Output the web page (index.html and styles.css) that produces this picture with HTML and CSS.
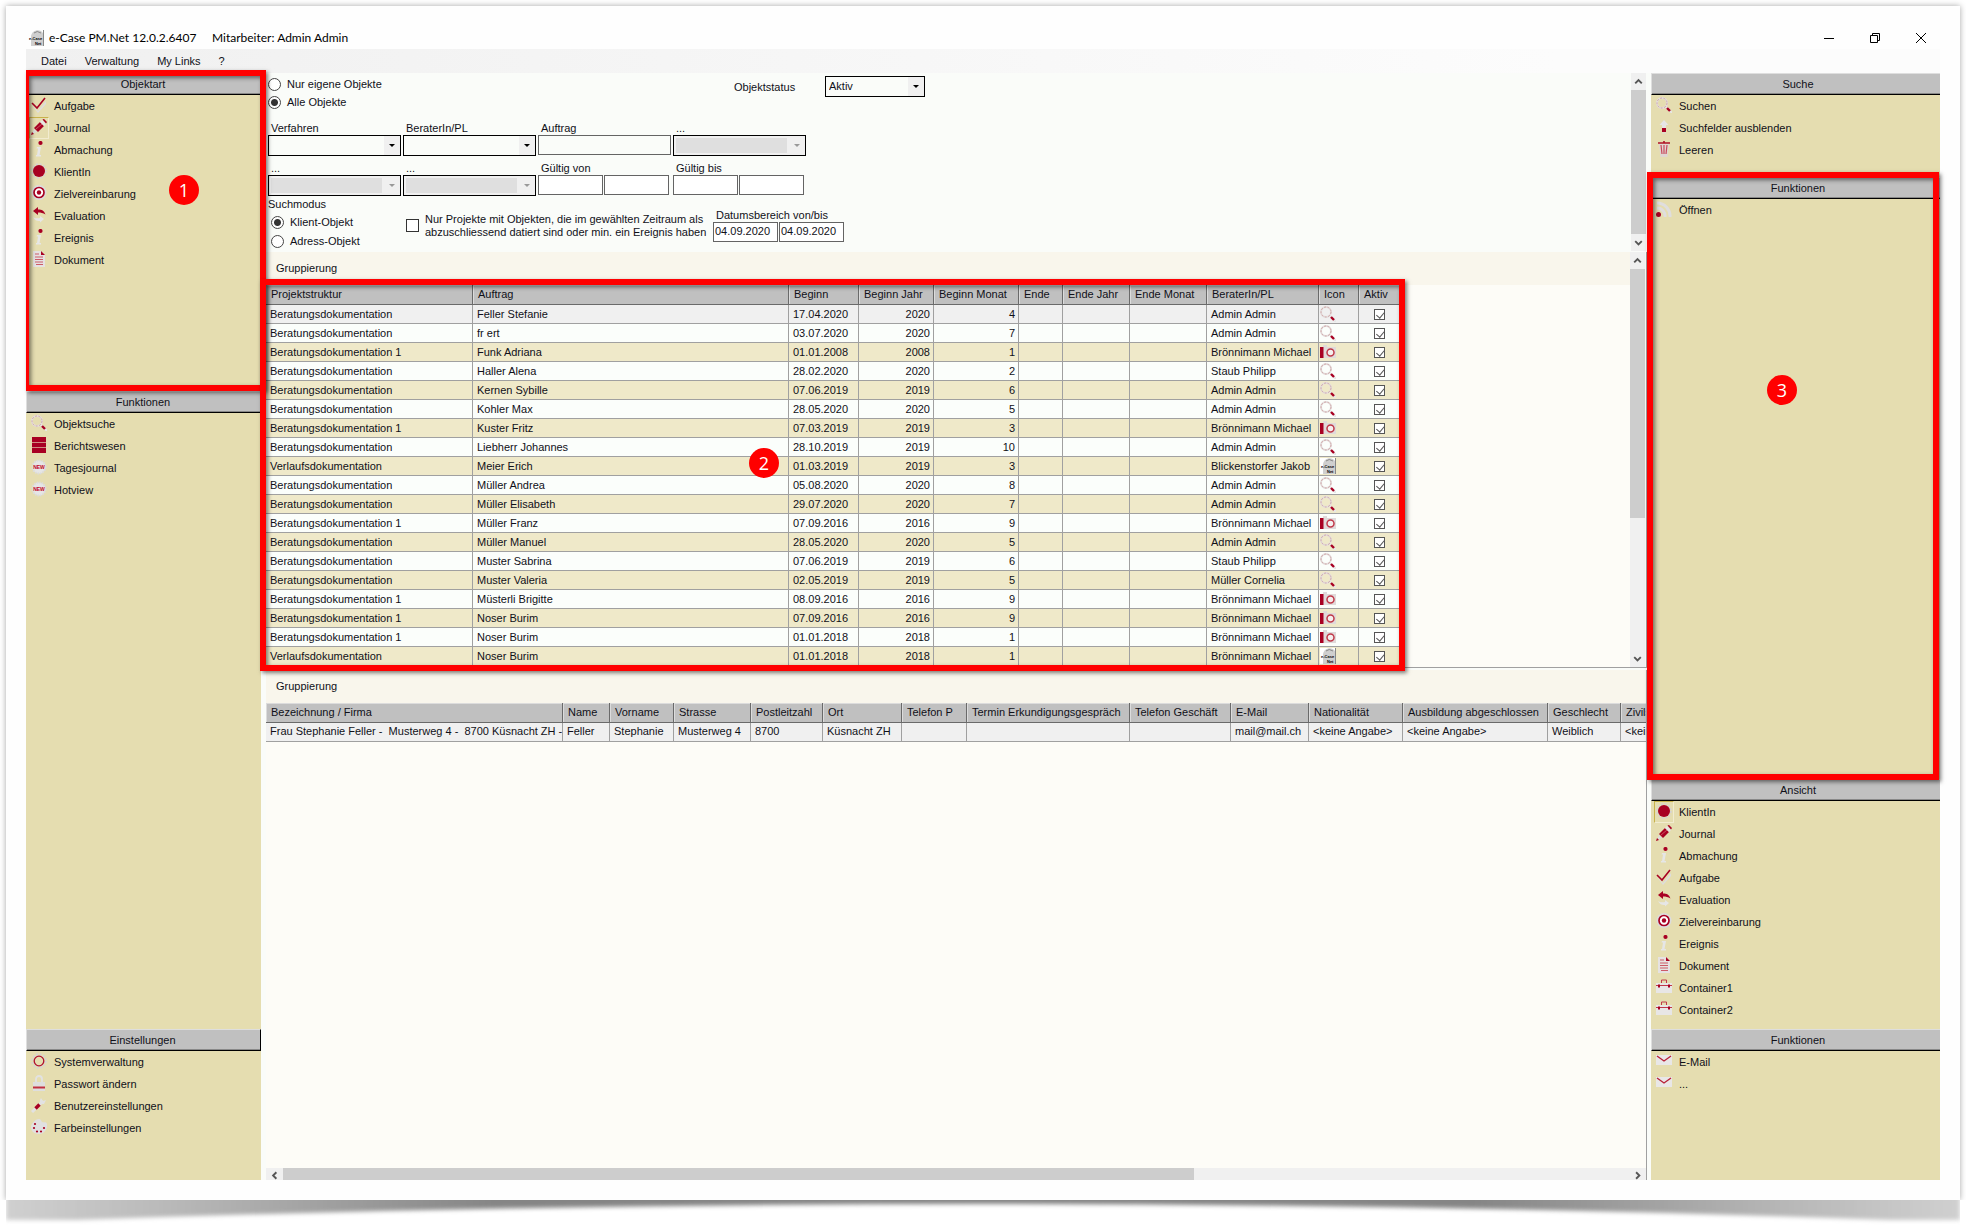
FILE: index.html
```html
<!DOCTYPE html>
<html lang="de">
<head>
<meta charset="utf-8">
<title>e-Case PM.Net</title>
<link rel="stylesheet" href="styles.css">
</head>
<body>
<svg class="sprite" aria-hidden="true">
  <symbol id="i-check" viewBox="0 0 16 16"><path d="M1 8l6 6 8-10v3l-8 9z" fill="#ddd"/><path d="M1 6l5 5 8-10" fill="none" stroke="#a80022" stroke-width="1.6"/></symbol>
  <symbol id="i-pencil" viewBox="0 0 16 16"><path d="M1 15l2-5 3 3z" fill="#ddd"/><path d="M3 9l6-6 4 4-6 6z" fill="#a80022"/><path d="M9 3l2-2 4 4-2 2z" fill="#e8e4e4"/><path d="M11.500 0.500l1.500-.5 3 3-1 1.500z" fill="#a80022"/><path d="M0 16l1-3 2 2z" fill="#a80022"/><path d="M5 10l6-5" stroke="#d88" stroke-width=".6"/></symbol>
  <symbol id="i-info" viewBox="0 0 16 16"><path d="M6 6h4L8.500 14H10v1.500H5V14h1l1-6.500H5.500z" fill="#e6e6e6"/><circle cx="9.500" cy="2" r="2.100" fill="#a80022"/></symbol>
  <symbol id="i-cog" viewBox="0 0 16 16"><circle cx="8" cy="8" r="6.800" fill="none" stroke="#d6d3d3" stroke-width="2" stroke-dasharray="2 1.600"/><circle cx="8" cy="8" r="6" fill="#a80022"/></symbol>
  <symbol id="i-target" viewBox="0 0 16 16"><circle cx="8" cy="7.500" r="7.500" fill="#dcdcdc"/><circle cx="8" cy="7.500" r="5" fill="#fff" stroke="#a80022" stroke-width="1.700"/><circle cx="8" cy="7.500" r="2.200" fill="#a80022"/></symbol>
  <symbol id="i-swap" viewBox="0 0 16 16"><path d="M2 4l5-4v2.500c4 0 6 1 7.500 5C12 6 10 5.500 7 5.500V8z" fill="#a80022"/><path d="M13 12l-4 3.500V14c-4 0-5-1-7-4 2 1.500 4 1.500 7 1V9z" fill="#e6e6e6"/></symbol>
  <symbol id="i-doc" viewBox="0 0 16 16"><path d="M2 0h8l4 4v12H2z" fill="#e6e2e2"/><path d="M10 0l4 4h-4z" fill="#a80022"/><path d="M4 3h4M4 6h8M4 8.500h8M4 11h8M5 13.500h7" stroke="#cc5a68"/></symbol>
  <symbol id="i-search" viewBox="0 0 16 16"><circle cx="6" cy="6" r="5" fill="none" stroke="#e4dddd" stroke-width="2"/><circle cx="6" cy="6" r="5" fill="none" stroke="#c99" stroke-width=".8" stroke-dasharray="2 1.500"/><path d="M10 10l6 6" stroke="#e6e6e6" stroke-width="2"/><path d="M11 11l3 3" stroke="#a80022" stroke-width="2.400"/></symbol>
  <symbol id="i-stack" viewBox="0 0 16 16"><path d="M1 0h14v16H1z" fill="#a80022"/><path d="M1 5.500h14M1 10.500h14" stroke="#cf8d80"/></symbol>
  <symbol id="i-new" viewBox="0 0 16 16"><circle cx="8" cy="8" r="6.500" fill="#e6e6e6" stroke="#dcdcdc" stroke-width="2" stroke-dasharray="1.500 1"/><text x="8" y="10" text-anchor="middle" font-family="Liberation Sans" font-weight="bold" font-size="5" fill="#c00020">NEW</text></symbol>
  <symbol id="i-gear" viewBox="0 0 16 16"><circle cx="8" cy="8" r="6.800" fill="none" stroke="#d6d3d3" stroke-width="2" stroke-dasharray="2 1.600"/><circle cx="8" cy="8" r="4.800" fill="none" stroke="#b01030" stroke-width="1.300"/></symbol>
  <symbol id="i-lock" viewBox="0 0 16 16"><path d="M5 7V4a3 3 0 0 1 6 0v3" fill="none" stroke="#e2e2e2" stroke-width="1.800"/><path d="M2 7h12v9H2z" fill="#dedede"/><path d="M2 12.500h12" stroke="#c03040" stroke-width="2"/></symbol>
  <symbol id="i-wrench" viewBox="0 0 16 16"><path d="M1 15L12 4" stroke="#e2e2e2" stroke-width="3"/><path d="M10 1l2 3 3-1-2 4H9V3z" fill="#e2e2e2"/><path d="M4.500 11.500l4-4" stroke="#a80022" stroke-width="3.400"/></symbol>
  <symbol id="i-palette" viewBox="0 0 16 16"><path d="M8 0c2 0 2 2 3 3s4-1 5 2-2 10-8 10-8-4-8-7 4-8 8-8z" fill="#e0e0e0"/><g fill="#a80022"><circle cx="4" cy="5" r="1.100"/><circle cx="3" cy="9" r="1.100"/><circle cx="6" cy="12.500" r="1.100"/><circle cx="10" cy="12.500" r="1.100"/><circle cx="13" cy="9" r="1.100"/></g></symbol>
  <symbol id="i-up" viewBox="0 0 16 16"><path d="M8 1l4.500 5H10v4H6V6H3.500z" fill="#e6e6e6"/><path d="M6 9h4v4H6z" fill="#a80022"/><path d="M6 13.500h4v1H6z" fill="#ddd"/></symbol>
  <symbol id="i-trash" viewBox="0 0 16 16"><path d="M3 3h10l-1.500 13h-7z" fill="#e0d6d2"/><path d="M2 2h12M8 0v2" stroke="#b01028" stroke-width="1.600"/><path d="M5 4l1 9M8 4v9M11 4l-1 9" stroke="#c8485a" stroke-width="1.200"/></symbol>
  <symbol id="i-feed" viewBox="0 0 16 16"><path d="M1 2a13 13 0 0 1 13 14M1 7a8 8 0 0 1 8 9" fill="none" stroke="#e0dede" stroke-width="3"/><circle cx="2.500" cy="13.500" r="2.500" fill="#a80022"/></symbol>
  <symbol id="i-case" viewBox="0 0 16 16"><path d="M0 4h16v10H0z" fill="#e8e6e6"/><path d="M5.500 4V1h5v3M0 6.500h16" fill="none" stroke="#c03848"/><path d="M3 5.500v3M13 5.500v3" stroke="#a80022" stroke-width="2"/></symbol>
  <symbol id="i-mail" viewBox="0 0 16 16"><path d="M0 2h16v10H0z" fill="#e9e7e7"/><path d="M1 3l7 5 7-5" fill="none" stroke="#b82038" stroke-width="1.400"/></symbol>
  <symbol id="i-camera" viewBox="0 0 16 16"><path d="M0 3h3V1h4v2h9v11H0z" fill="#e0dada"/><path d="M0 3h3.500v11H0z" fill="#a80022"/><circle cx="10.500" cy="8.500" r="3.500" fill="#f4eeee" stroke="#c03848" stroke-width="1.500"/></symbol>
  <symbol id="i-logo" viewBox="0 0 16 16"><path d="M3 6C4 1 9-1 13 1l2 2v13H3z" fill="#cfcfcf"/><path d="M6 3q3-3 7 0M15.500 0v16" stroke="#888" fill="none"/><text x="1" y="10" font-family="Liberation Sans" font-weight="bold" font-size="4" fill="#000">e-Case</text><text x="7" y="15" font-family="Liberation Sans" font-weight="bold" font-size="4" fill="#000">Net</text></symbol>
  <symbol id="c-up" viewBox="0 0 16 16"><path d="M4.500 10L8 6.500 11.500 10" fill="none" stroke="#555" stroke-width="2"/></symbol>
  <symbol id="c-down" viewBox="0 0 16 16"><path d="M4.500 6.500L8 10l3.500-3.500" fill="none" stroke="#555" stroke-width="2"/></symbol>
  <symbol id="c-left" viewBox="0 0 16 16"><path d="M10 4.500L6.500 8l3.500 3.500" fill="none" stroke="#555" stroke-width="2"/></symbol>
  <symbol id="c-right" viewBox="0 0 16 16"><path d="M6.500 4.500L10 8l-3.500 3.500" fill="none" stroke="#555" stroke-width="2"/></symbol>
</svg>

<div class="stage">
<div class="paper">
  <header class="titlebar">
    <svg class="ico"><use href="#i-logo"/></svg>
    <span class="app-name">e-Case PM.Net 12.0.2.6407</span>
    <span class="app-user">Mitarbeiter: Admin Admin</span>
    <div class="win-buttons">
      <button aria-label="Minimieren"><svg viewBox="0 0 12 12"><path d="M1 6.500h10"/></svg></button>
      <button aria-label="Wiederherstellen"><svg viewBox="0 0 12 12"><path d="M1.500 3.500h7v7h-7zM3.500 3.500v-2h7v7h-2"/></svg></button>
      <button aria-label="Schliessen"><svg viewBox="0 0 12 12"><path d="M1 1l10 10M11 1L1 11"/></svg></button>
    </div>
  </header>
  <nav class="menubar"><button>Datei</button><button>Verwaltung</button><button>My Links</button><button>?</button></nav>

  <div class="workspace">
    <aside class="side side-left">
      <section class="panel">
        <h2>Objektart</h2>
        <button class="item"><svg class="ico"><use href="#i-check"/></svg>Aufgabe</button>
        <button class="item picked"><svg class="ico"><use href="#i-pencil"/></svg>Journal</button>
        <button class="item"><svg class="ico"><use href="#i-info"/></svg>Abmachung</button>
        <button class="item"><svg class="ico"><use href="#i-cog"/></svg>KlientIn</button>
        <button class="item"><svg class="ico"><use href="#i-target"/></svg>Zielvereinbarung</button>
        <button class="item"><svg class="ico"><use href="#i-swap"/></svg>Evaluation</button>
        <button class="item"><svg class="ico"><use href="#i-info"/></svg>Ereignis</button>
        <button class="item"><svg class="ico"><use href="#i-doc"/></svg>Dokument</button>
        <div class="callout callout-1"><span class="badge">1</span></div>
      </section>
      <section class="panel">
        <h2>Funktionen</h2>
        <button class="item"><svg class="ico"><use href="#i-search"/></svg>Objektsuche</button>
        <button class="item"><svg class="ico"><use href="#i-stack"/></svg>Berichtswesen</button>
        <button class="item"><svg class="ico"><use href="#i-new"/></svg>Tagesjournal</button>
        <button class="item"><svg class="ico"><use href="#i-new"/></svg>Hotview</button>
      </section>
      <section class="panel">
        <h2 class="active">Einstellungen</h2>
        <button class="item"><svg class="ico"><use href="#i-gear"/></svg>Systemverwaltung</button>
        <button class="item"><svg class="ico"><use href="#i-lock"/></svg>Passwort ändern</button>
        <button class="item"><svg class="ico"><use href="#i-wrench"/></svg>Benutzereinstellungen</button>
        <button class="item"><svg class="ico"><use href="#i-palette"/></svg>Farbeinstellungen</button>
      </section>
    </aside>

    <main class="center">
      <div class="search">
        <form class="search-form">
          <div class="top-row">
            <div class="radios">
              <label><input type="radio" name="scope">Nur eigene Objekte</label>
              <label><input type="radio" name="scope" checked>Alle Objekte</label>
            </div>
            <label class="status-label" for="status">Objektstatus</label>
            <div class="select status"><select id="status"><option>Aktiv</option></select></div>
          </div>
          <div class="fields">
            <div><label for="f1">Verfahren</label><div class="select"><select id="f1"><option></option></select></div></div>
            <div><label for="f2">BeraterIn/PL</label><div class="select"><select id="f2"><option></option></select></div></div>
            <div><label for="f3">Auftrag</label><input id="f3" class="tinted" type="text"></div>
            <div><label for="f4">...</label><div class="select off"><select id="f4" disabled><option></option></select></div></div>
            <div><label for="f5">...</label><div class="select off"><select id="f5" disabled><option></option></select></div></div>
            <div><label for="f6">...</label><div class="select off"><select id="f6" disabled><option></option></select></div></div>
            <div><label for="f7">Gültig von</label><div class="pair"><input id="f7" type="text"><input type="text" aria-label="Gültig von, Ende"></div></div>
            <div><label for="f8">Gültig bis</label><div class="pair"><input id="f8" type="text"><input type="text" aria-label="Gültig bis, Ende"></div></div>
          </div>
          <div class="mode-row">
            <div class="mode">
              <div class="mode-title">Suchmodus</div>
              <label><input type="radio" name="mode" checked>Klient-Objekt</label>
              <label><input type="radio" name="mode">Adress-Objekt</label>
            </div>
            <label class="only"><input type="checkbox"><span>Nur Projekte mit Objekten, die im gewählten Zeitraum als<br>abzuschliessend datiert sind oder min. ein Ereignis haben</span></label>
            <div class="range"><label for="d1">Datumsbereich von/bis</label><div class="pair"><input id="d1" type="text" value="04.09.2020"><input type="text" value="04.09.2020" aria-label="Datumsbereich bis"></div></div>
          </div>
        </form>
        <div class="vscroll"><svg><use href="#c-up"/></svg><i></i><svg><use href="#c-down"/></svg></div>
      </div>

      <section class="results">
        <div class="grid-area">
          <div class="group-bar">Gruppierung</div>
          <div class="table-clip">
          <table class="grid objects">
            <colgroup><col class="w207"><col class="w316"><col class="w70"><col class="w75"><col class="w85"><col class="w44"><col class="w67"><col class="w77"><col class="w112"><col class="w40"><col class="w41"></colgroup>
            <thead><tr><th>Projektstruktur</th><th>Auftrag</th><th>Beginn</th><th>Beginn Jahr</th><th>Beginn Monat</th><th>Ende</th><th>Ende Jahr</th><th>Ende Monat</th><th>BeraterIn/PL</th><th>Icon</th><th>Aktiv</th></tr></thead>
            <tbody>
              <tr><td>Beratungsdokumentation</td><td>Feller Stefanie</td><td>17.04.2020</td><td>2020</td><td>4</td><td></td><td></td><td></td><td>Admin Admin</td><td><svg><use href="#i-search"/></svg></td><td><input type="checkbox" checked aria-label="Aktiv"></td></tr>
              <tr><td>Beratungsdokumentation</td><td>fr ert</td><td>03.07.2020</td><td>2020</td><td>7</td><td></td><td></td><td></td><td>Admin Admin</td><td><svg><use href="#i-search"/></svg></td><td><input type="checkbox" checked aria-label="Aktiv"></td></tr>
              <tr><td>Beratungsdokumentation 1</td><td>Funk Adriana</td><td>01.01.2008</td><td>2008</td><td>1</td><td></td><td></td><td></td><td>Brönnimann Michael</td><td><svg><use href="#i-camera"/></svg></td><td><input type="checkbox" checked aria-label="Aktiv"></td></tr>
              <tr><td>Beratungsdokumentation</td><td>Haller Alena</td><td>28.02.2020</td><td>2020</td><td>2</td><td></td><td></td><td></td><td>Staub Philipp</td><td><svg><use href="#i-search"/></svg></td><td><input type="checkbox" checked aria-label="Aktiv"></td></tr>
              <tr><td>Beratungsdokumentation</td><td>Kernen Sybille</td><td>07.06.2019</td><td>2019</td><td>6</td><td></td><td></td><td></td><td>Admin Admin</td><td><svg><use href="#i-search"/></svg></td><td><input type="checkbox" checked aria-label="Aktiv"></td></tr>
              <tr><td>Beratungsdokumentation</td><td>Kohler Max</td><td>28.05.2020</td><td>2020</td><td>5</td><td></td><td></td><td></td><td>Admin Admin</td><td><svg><use href="#i-search"/></svg></td><td><input type="checkbox" checked aria-label="Aktiv"></td></tr>
              <tr><td>Beratungsdokumentation 1</td><td>Kuster Fritz</td><td>07.03.2019</td><td>2019</td><td>3</td><td></td><td></td><td></td><td>Brönnimann Michael</td><td><svg><use href="#i-camera"/></svg></td><td><input type="checkbox" checked aria-label="Aktiv"></td></tr>
              <tr><td>Beratungsdokumentation</td><td>Liebherr Johannes</td><td>28.10.2019</td><td>2019</td><td>10</td><td></td><td></td><td></td><td>Admin Admin</td><td><svg><use href="#i-search"/></svg></td><td><input type="checkbox" checked aria-label="Aktiv"></td></tr>
              <tr><td>Verlaufsdokumentation</td><td>Meier Erich</td><td>01.03.2019</td><td>2019</td><td>3</td><td></td><td></td><td></td><td>Blickenstorfer Jakob</td><td><svg class="logo"><use href="#i-logo"/></svg></td><td><input type="checkbox" checked aria-label="Aktiv"></td></tr>
              <tr><td>Beratungsdokumentation</td><td>Müller Andrea</td><td>05.08.2020</td><td>2020</td><td>8</td><td></td><td></td><td></td><td>Admin Admin</td><td><svg><use href="#i-search"/></svg></td><td><input type="checkbox" checked aria-label="Aktiv"></td></tr>
              <tr><td>Beratungsdokumentation</td><td>Müller Elisabeth</td><td>29.07.2020</td><td>2020</td><td>7</td><td></td><td></td><td></td><td>Admin Admin</td><td><svg><use href="#i-search"/></svg></td><td><input type="checkbox" checked aria-label="Aktiv"></td></tr>
              <tr><td>Beratungsdokumentation 1</td><td>Müller Franz</td><td>07.09.2016</td><td>2016</td><td>9</td><td></td><td></td><td></td><td>Brönnimann Michael</td><td><svg><use href="#i-camera"/></svg></td><td><input type="checkbox" checked aria-label="Aktiv"></td></tr>
              <tr><td>Beratungsdokumentation</td><td>Müller Manuel</td><td>28.05.2020</td><td>2020</td><td>5</td><td></td><td></td><td></td><td>Admin Admin</td><td><svg><use href="#i-search"/></svg></td><td><input type="checkbox" checked aria-label="Aktiv"></td></tr>
              <tr><td>Beratungsdokumentation</td><td>Muster Sabrina</td><td>07.06.2019</td><td>2019</td><td>6</td><td></td><td></td><td></td><td>Staub Philipp</td><td><svg><use href="#i-search"/></svg></td><td><input type="checkbox" checked aria-label="Aktiv"></td></tr>
              <tr><td>Beratungsdokumentation</td><td>Muster Valeria</td><td>02.05.2019</td><td>2019</td><td>5</td><td></td><td></td><td></td><td>Müller Cornelia</td><td><svg><use href="#i-search"/></svg></td><td><input type="checkbox" checked aria-label="Aktiv"></td></tr>
              <tr><td>Beratungsdokumentation 1</td><td>Müsterli Brigitte</td><td>08.09.2016</td><td>2016</td><td>9</td><td></td><td></td><td></td><td>Brönnimann Michael</td><td><svg><use href="#i-camera"/></svg></td><td><input type="checkbox" checked aria-label="Aktiv"></td></tr>
              <tr><td>Beratungsdokumentation 1</td><td>Noser Burim</td><td>07.09.2016</td><td>2016</td><td>9</td><td></td><td></td><td></td><td>Brönnimann Michael</td><td><svg><use href="#i-camera"/></svg></td><td><input type="checkbox" checked aria-label="Aktiv"></td></tr>
              <tr><td>Beratungsdokumentation 1</td><td>Noser Burim</td><td>01.01.2018</td><td>2018</td><td>1</td><td></td><td></td><td></td><td>Brönnimann Michael</td><td><svg><use href="#i-camera"/></svg></td><td><input type="checkbox" checked aria-label="Aktiv"></td></tr>
              <tr><td>Verlaufsdokumentation</td><td>Noser Burim</td><td>01.01.2018</td><td>2018</td><td>1</td><td></td><td></td><td></td><td>Brönnimann Michael</td><td><svg class="logo"><use href="#i-logo"/></svg></td><td><input type="checkbox" checked aria-label="Aktiv"></td></tr>
            </tbody>
          </table>
          </div>
        </div>
        <div class="vscroll part"><svg><use href="#c-up"/></svg><i></i><svg><use href="#c-down"/></svg></div>
        <div class="callout callout-2"><span class="badge">2</span></div>
      </section>

      <section class="details">
        <div class="group-bar">Gruppierung</div>
        <div class="table-clip">
        <table class="grid persons">
          <colgroup><col class="w297"><col class="w47"><col class="w64"><col class="w77"><col class="w72"><col class="w79"><col class="w65"><col class="w163"><col class="w101"><col class="w78"><col class="w94"><col class="w145"><col class="w73"><col class="w77"></colgroup>
          <thead><tr><th>Bezeichnung / Firma</th><th>Name</th><th>Vorname</th><th>Strasse</th><th>Postleitzahl</th><th>Ort</th><th>Telefon P</th><th>Termin Erkundigungsgespräch</th><th>Telefon Geschäft</th><th>E-Mail</th><th>Nationalität</th><th>Ausbildung abgeschlossen</th><th>Geschlecht</th><th>Zivilstand</th></tr></thead>
          <tbody><tr><td>Frau Stephanie Feller -&nbsp; Musterweg 4 -&nbsp; 8700 Küsnacht ZH -</td><td>Feller</td><td>Stephanie</td><td>Musterweg 4</td><td>8700</td><td>Küsnacht ZH</td><td></td><td></td><td></td><td>mail@mail.ch</td><td>&lt;keine Angabe&gt;</td><td>&lt;keine Angabe&gt;</td><td>Weiblich</td><td>&lt;keine Angabe&gt;</td></tr></tbody>
        </table>
        </div>
        <div class="hscroll"><svg><use href="#c-left"/></svg><i></i><svg><use href="#c-right"/></svg></div>
      </section>
    </main>

    <aside class="side side-right">
      <section class="panel">
        <h2>Suche</h2>
        <button class="item"><svg class="ico"><use href="#i-search"/></svg>Suchen</button>
        <button class="item"><svg class="ico"><use href="#i-up"/></svg>Suchfelder ausblenden</button>
        <button class="item"><svg class="ico"><use href="#i-trash"/></svg>Leeren</button>
      </section>
      <section class="panel">
        <h2>Funktionen</h2>
        <button class="item"><svg class="ico"><use href="#i-feed"/></svg>Öffnen</button>
        <div class="callout callout-3"><span class="badge">3</span></div>
      </section>
      <section class="panel">
        <h2>Ansicht</h2>
        <button class="item picked"><svg class="ico"><use href="#i-cog"/></svg>KlientIn</button>
        <button class="item"><svg class="ico"><use href="#i-pencil"/></svg>Journal</button>
        <button class="item"><svg class="ico"><use href="#i-info"/></svg>Abmachung</button>
        <button class="item"><svg class="ico"><use href="#i-check"/></svg>Aufgabe</button>
        <button class="item"><svg class="ico"><use href="#i-swap"/></svg>Evaluation</button>
        <button class="item"><svg class="ico"><use href="#i-target"/></svg>Zielvereinbarung</button>
        <button class="item"><svg class="ico"><use href="#i-info"/></svg>Ereignis</button>
        <button class="item"><svg class="ico"><use href="#i-doc"/></svg>Dokument</button>
        <button class="item"><svg class="ico"><use href="#i-case"/></svg>Container1</button>
        <button class="item"><svg class="ico"><use href="#i-case"/></svg>Container2</button>
      </section>
      <section class="panel">
        <h2>Funktionen</h2>
        <button class="item"><svg class="ico"><use href="#i-mail"/></svg>E-Mail</button>
        <button class="item"><svg class="ico"><use href="#i-mail"/></svg>...</button>
      </section>
    </aside>
  </div>
</div>
<svg class="curl" viewBox="0 0 1954 26" preserveAspectRatio="none" aria-hidden="true">
  <defs>
    <linearGradient id="curl-fill"><stop offset="0" stop-color="#d0d0d0"/><stop offset=".1" stop-color="#b4b4b4"/><stop offset=".25" stop-color="#858585"/><stop offset=".75" stop-color="#858585"/><stop offset=".9" stop-color="#b4b4b4"/><stop offset="1" stop-color="#d0d0d0"/></linearGradient>
    <filter id="curl-blur" x="-1%" y="-40%" width="102%" height="180%"><feGaussianBlur stdDeviation="2"/></filter>
  </defs>
  <path d="M0-12V20H70Q977-12 1884 20H1954V-12z" fill="url(#curl-fill)" filter="url(#curl-blur)"/>
</svg>
</div>
</body>
</html>
```
FILE: styles.css
```css
* { box-sizing: border-box; }
body {
  margin: 0;
  background: #fff;
  color: #101018;
  font: 11px/13px "Liberation Sans", Arial, sans-serif;
}
button, input, select { font: inherit; color: inherit; }
button { border: 0; padding: 0; background: none; text-align: left; }
.sprite { display: none; }

.stage {
  display: flex;
  flex-direction: column;
  min-height: 100vh;
  padding: 6px 14px 3px 6px;
}
.paper {
  flex: 1;
  display: flex;
  flex-direction: column;
  padding: 20px;
  background: #fefefe;
  box-shadow: 0 0 6px rgba(0, 0, 0, .35);
  clip-path: inset(-6px -6px 0 -6px);
}
.curl { display: block; width: 100%; height: 26px; }

/* title and menu */
.titlebar { display: flex; align-items: center; height: 23px; padding-left: 2px; font: 12px/16px Lato, sans-serif; color: #000; }
.titlebar .ico { width: 16px; height: 16px; margin-right: 5px; }
.app-name { width: 163px; white-space: nowrap; }
.win-buttons { display: flex; gap: 34px; margin-left: auto; padding-right: 13px; }
.win-buttons svg { display: block; width: 12px; height: 12px; fill: none; stroke: #000; }
.menubar {
  display: flex;
  gap: 18px;
  height: 24px;
  padding-left: 15px;
  background: linear-gradient(90deg, #f0f0f0, #fcfcfc 80%);
}

.workspace { flex: 1; display: grid; grid-template-columns: 235px minmax(0, 1fr) 289px; gap: 4px; background: #fafcf9; }

/* side panels */
.side { display: grid; background: #e5ddb0; position: relative; }
.side-left { grid-template-rows: 318fr 638fr 151fr; }
.side-right { grid-template-rows: 104fr 602fr 250fr 151fr; }
.panel { position: relative; display: flex; flex-direction: column; }
.panel h2 {
  margin: 0;
  height: 22px;
  flex: none;
  border-top: 1px solid #dedede;
  border-left: 1px solid #dedede;
  border-bottom: 1px solid #000;
  box-shadow: inset 0 -1px #888;
  background: #c0c0c0;
  font: inherit;
  line-height: 20px;
  text-align: center;
}
.panel h2.active { border-right: 1px solid #000; }
.side-left h2 { padding-right: 2px; }
.side-right h2 { padding-left: 4px; }
.item { display: flex; align-items: center; gap: 5px; height: 22px; padding-left: 3px; }
.item .ico { width: 20px; height: 22px; padding: 1px 1px 3px; border: 1px solid transparent; }
.item.picked .ico { border-color: #c8b24c #f2ecd0 #f2ecd0 #c8b24c; }

/* search form */
.center { display: flex; flex-direction: column; padding-left: 1px; }
.search { display: flex; justify-content: space-between; height: 178px; padding-right: 1px; }
.search-form { padding: 2px 0 0 2px; }
.top-row { display: flex; height: 47px; align-items: flex-start; }
.radios { width: 466px; }
.radios label, .mode label { display: flex; align-items: center; gap: 6px; height: 18px; }
.status-label { width: 91px; padding-top: 6px; }
.status { width: 100px; margin-top: 1px; }
input[type="radio"] {
  appearance: none;
  margin: 0;
  width: 13px;
  height: 13px;
  border: 1px solid #444;
  border-radius: 50%;
  background: #fff;
}
input[type="radio"]:checked { background: radial-gradient(circle, #333 0 3px, #fff 4px); }
.fields { display: grid; grid-template-columns: repeat(4, 133px); gap: 6px 2px; }
.fields label { display: block; padding-left: 3px; }
input[type="text"] { display: block; width: 133px; height: 20px; border: 1px solid #646464; background: #fff; padding: 0 1px 2px; }
input.tinted { background: #fafcf9; }
.pair { display: flex; gap: 1px; }
.pair input[type="text"] { width: 65px; }
.select { position: relative; height: 21px; }
.select select {
  appearance: none;
  display: block;
  width: 100%;
  height: 21px;
  padding: 0 20px 0 3px;
  border: 1px solid #000;
  border-radius: 0;
  opacity: 1;
  background: linear-gradient(90deg, #fafcf9 calc(100% - 16px), #f0f0f0 0);
}
.select.off select { background: linear-gradient(#dfdfdf, #dfdfdf) 2px 2px / calc(100% - 20px) 15px no-repeat #f0f0f0; }
.select::after {
  content: "";
  position: absolute;
  right: 6px;
  top: 9px;
  border: solid transparent;
  border-width: 3px 3px 0;
  border-top-color: #000;
}
.select.off::after { border-top-color: #999; }
.mode-row { display: flex; padding-top: 2px; }
.mode { width: 138px; }
.mode-title { height: 15px; }
.mode label { padding-left: 3px; height: 19px; }
.only { display: flex; gap: 6px; width: 307px; padding-top: 15px; white-space: nowrap; }
.only input { appearance: none; flex: none; margin: 6px 0 0; width: 13px; height: 13px; border: 1px solid #333; background: #fff; }
.range { padding-top: 11px; }
.range label { padding-left: 3px; }

/* scroll bars */
.vscroll { display: flex; flex-direction: column; width: 15px; background: #f0f0f0; }
.vscroll svg { width: 15px; height: 17px; flex: none; }
.vscroll i { flex: 1; background: #cdcdcd; }
.vscroll.part svg:last-child { margin-top: auto; }
.vscroll.part i { flex: 0 0 60%; }
.hscroll { display: flex; justify-content: space-between; height: 12px; margin-top: auto; background: #f0f0f0; }
.hscroll svg { width: 17px; height: 15px; }
.hscroll i { width: 66%; margin-right: auto; background: #cdcdcd; }

/* grids */
.results { position: relative; flex: 415 0 0; display: flex; margin-top: 1px; padding-right: 1px; border-bottom: 1px solid #a0a0a0; border-right: 1px solid #a0a0a0; background: #fdfcf7; }
.grid-area { flex: 1; min-width: 0; }
.details { flex: 511 0 0; display: flex; flex-direction: column; min-width: 0; margin-top: 2px; border-right: 1px solid #a0a0a0; background: #fdfcf7; }
.group-bar { height: 33px; padding: 10px 10px 0; background: #f9f6ec; }
.table-clip { overflow: hidden; }
.grid { table-layout: fixed; border-spacing: 0; width: 0; }
.grid th {
  height: 20px;
  padding: 0 0 0 5px;
  background: #c0c0c0;
  border-right: 1px solid #6a6a6a;
  border-bottom: 1px solid #6a6a6a;
  box-shadow: inset 1px 1px #dcdcdc;
  font-weight: normal;
  text-align: left;
  white-space: nowrap;
  overflow: hidden;
}
.grid td {
  height: 19px;
  padding: 0 3px 0 4px;
  border-right: 1px solid #a0a0a0;
  border-bottom: 1px solid #a0a0a0;
  white-space: nowrap;
  overflow: hidden;
}
.grid tr { background: #fbfefb; }
.grid tbody tr:nth-child(odd) { background: #efe9c9; }
.grid tbody tr:first-child { background: #f0f0f0; }
.objects td:nth-child(4), .objects td:nth-child(5) { text-align: right; }
.objects td:nth-child(10) { padding: 0 1px; }
.objects td:nth-child(11) { padding: 0; text-align: center; }
.persons td:first-child { padding-right: 0; }
.grid svg { display: block; width: 16px; height: 16px; }
.grid svg.logo { background: #fff; }
.grid input { appearance: none; display: block; position: relative; margin: 0 auto; width: 11px; height: 11px; border: 1px solid #555; background: #fff; }
.grid input::after { content: ""; position: absolute; left: 3px; top: 0; width: 4px; height: 7px; border: solid #555; border-width: 0 1px 1px 0; transform: rotate(40deg); }
.w207 { width: 207px; } .w316 { width: 316px; } .w70 { width: 70px; } .w75 { width: 75px; }
.w85 { width: 85px; } .w44 { width: 44px; } .w67 { width: 67px; } .w77 { width: 77px; }
.w112 { width: 112px; } .w40 { width: 40px; } .w41 { width: 41px; }
.w297 { width: 297px; } .w47 { width: 47px; } .w64 { width: 64px; } .w72 { width: 72px; }
.w79 { width: 79px; } .w65 { width: 65px; } .w163 { width: 163px; } .w101 { width: 101px; }
.w78 { width: 78px; } .w94 { width: 94px; } .w145 { width: 145px; } .w73 { width: 73px; }

/* numbered call-outs over the window */
.callout {
  position: absolute;
  z-index: 2;
  border: 6px solid #f00;
  box-shadow: 2px 2px 4px rgba(0, 0, 0, .5), inset 2px 2px 4px rgba(0, 0, 0, .5);
  pointer-events: none;
}
.callout-1 { inset: -3px -5px 0 0; border-left-width: 3px; }
.callout-2 { top: 27px; bottom: -4px; left: -6px; width: 1145px; }
.callout-3 { inset: -5px 1px -1px -4px; }
.badge {
  position: absolute;
  width: 30px;
  height: 30px;
  border-radius: 50%;
  background: #f00;
  color: #fff;
  font: 18px/30px "Open Sans", sans-serif;
  text-align: center;
}
.callout-1 .badge { left: 140px; top: 99px; }
.callout-2 .badge { left: 483px; top: 163px; }
.callout-3 .badge { left: 114px; top: 197px; }
```
